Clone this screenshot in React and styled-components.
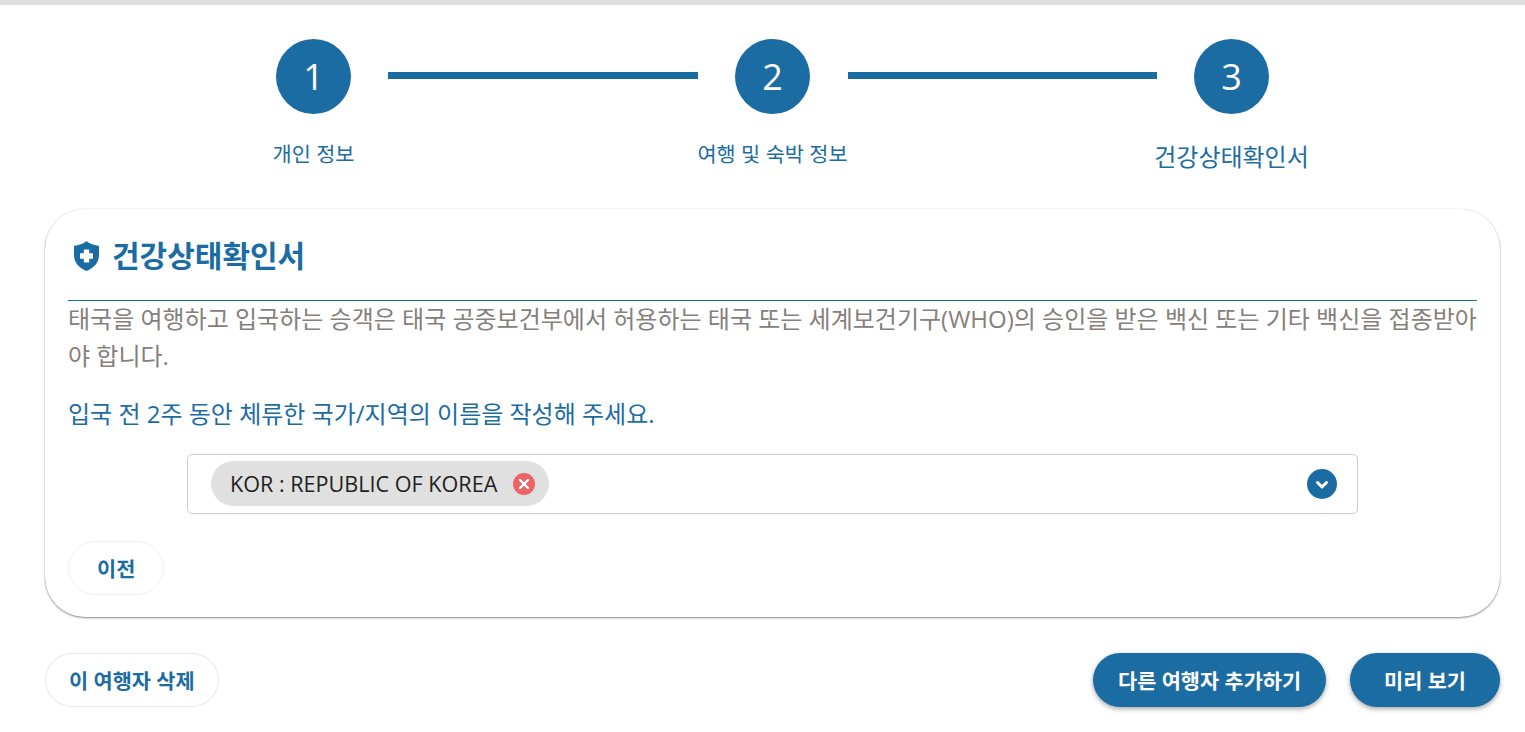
import React from "react";
import styled, { createGlobalStyle } from "styled-components";

const BLUE = "#1c6ca4";

const GlobalStyle = createGlobalStyle`
  html, body {
    margin: 0;
    padding: 0;
    background: #fff;
    font-family: "Open Sans", "Noto Sans CJK KR", sans-serif;
  }
`;

const Page = styled.div`
  width: 1525px;
  height: 732px;
  overflow: hidden;
  border-top: 5px solid #dedede;
  box-sizing: border-box;
`;

const Stepper = styled.div`
  display: flex;
  justify-content: center;
  padding: 34px 0 0 21px;
  height: 170px;
  box-sizing: border-box;
`;

const Step = styled.div`
  width: ${(p) => p.$width || 150}px;
  padding-right: ${(p) => (p.$width ? 0 : 1)}px;
  box-sizing: border-box;
  display: flex;
  flex-direction: column;
  align-items: center;
`;

const Circle = styled.div`
  width: 75px;
  height: 75px;
  border-radius: 50%;
  background: ${BLUE};
  color: #fff;
  font-size: 36px;
  display: flex;
  align-items: center;
  justify-content: center;
`;

const StepLabel = styled.div`
  margin-top: ${(p) => (p.$active ? "29px" : "26px")};
  color: ${BLUE};
  font-size: ${(p) => (p.$active ? "24px" : "20.8px")};
  line-height: 28px;
  white-space: nowrap;
`;

const Connector = styled.div`
  width: ${(p) => p.$width}px;
  height: 7px;
  margin-top: 33px;
  background: ${BLUE};
`;

const Card = styled.section`
  width: 1455px;
  height: 408px;
  margin-left: 45px;
  padding: 0 23px;
  box-sizing: border-box;
  border-radius: 40px;
  background: #fff;
  box-shadow: 0 1px 2px rgba(0, 0, 0, 0.45), 0 0 1px rgba(0, 0, 0, 0.15);
  margin-top: 34px;
`;

const CardHeader = styled.div`
  height: 92px;
  display: flex;
  align-items: center;
  gap: 13px;
  padding: 10px 0 7px 6px;
  box-sizing: border-box;
  border-bottom: 1px solid ${BLUE};
`;

const Title = styled.h2`
  margin: 0;
  color: ${BLUE};
  font-size: 30px;
  font-weight: 700;
  line-height: 40px;
`;

const Notice = styled.p`
  margin: 0;
  color: #85807b;
  font-size: 24px;
  line-height: 36.5px;
  word-break: break-all;
`;

const Question = styled.p`
  margin: 21px 0 0;
  color: ${BLUE};
  font-size: 24px;
  line-height: 37px;
`;

const Select = styled.div`
  width: 1171px;
  height: 60px;
  margin: 22px 0 0 119px;
  box-sizing: border-box;
  border: 1px solid #ccc;
  border-radius: 5px;
  display: flex;
  align-items: center;
  justify-content: space-between;
  padding: 0 20px 1px 23px;
`;

const Chip = styled.div`
  height: 45px;
  padding: 0 14px 0 19px;
  border-radius: 23px;
  background: #e0e0e0;
  color: #222;
  font-size: 21.6px;
  display: flex;
  align-items: center;
  gap: 16px;
`;

const Footer = styled.div`
  display: flex;
  justify-content: space-between;
  width: 1455px;
  margin: 36px 0 0 45px;
`;

const Actions = styled.div`
  display: flex;
  gap: 24px;
`;

const OutlineButton = styled.button`
  height: 54px;
  padding: 0 ${(p) => p.$pad || 23}px;
  border: 1px solid #e6e6e6;
  border-radius: 27px;
  background: #fff;
  color: ${BLUE};
  font-family: inherit;
  font-size: 20.8px;
  font-weight: 600;
`;

const BackButton = styled(OutlineButton)`
  display: block;
  margin-top: 27px;
  border-color: #f0f0f0;
`;

const PrimaryButton = styled.button`
  height: 54px;
  padding: 0 ${(p) => p.$pad || 25}px;
  border: none;
  border-radius: 27px;
  background: ${BLUE};
  color: #fff;
  font-family: inherit;
  font-size: 20.8px;
  font-weight: 600;
  box-shadow: 0 2px 5px rgba(0, 0, 0, 0.35);
`;

const ShieldIcon = () => (
  <svg width="25" height="30" viewBox="0 0 25 30">
    <path
      d="M12.500 0C14.500 2 19.500 4.300 24.500 4.800c.3 0 .5.2.5.5V14c0 7.500-5 13-12.500 16C5 27 0 21.500 0 14V5.300c0-.3.2-.5.5-.5C5.500 4.300 10.500 2 12.500 0z"
      fill={BLUE}
    />
    <path d="M10.300 8.500h4.400c.3 0 .5.2.5.5v3.300h3.300c.3 0 .5.2.5.5v4.400c0 .3-.2.5-.5.5h-3.300v3.300c0 .3-.2.5-.5.5h-4.400c-.3 0-.5-.2-.5-.5v-3.300H6.500c-.3 0-.5-.2-.5-.5v-4.400c0-.3.2-.5.5-.5h3.300V9c0-.3.2-.5.5-.5z" fill="#fff" />
  </svg>
);

const RemoveIcon = () => (
  <svg width="22" height="22" viewBox="0 0 22 22">
    <circle cx="11" cy="11" r="11" fill="#ec6467" />
    <path d="M7 7l8 8M15 7l-8 8" stroke="#fff" strokeWidth="2.400" strokeLinecap="round" />
  </svg>
);

const ChevronIcon = () => (
  <svg width="30" height="30" viewBox="0 0 30 30">
    <circle cx="15" cy="15" r="15" fill={BLUE} />
    <path d="M10.500 13.500 15 18l4.500-4.500" fill="none" stroke="#fff" strokeWidth="3" strokeLinecap="round" strokeLinejoin="round" />
  </svg>
);

export default function App() {
  return (
    <Page>
      <GlobalStyle />
      <Stepper>
        <Step $width={149}>
          <Circle>1</Circle>
          <StepLabel>개인 정보</StepLabel>
        </Step>
        <Connector $width={310} />
        <Step>
          <Circle>2</Circle>
          <StepLabel>여행 및 숙박 정보</StepLabel>
        </Step>
        <Connector $width={309} />
        <Step>
          <Circle>3</Circle>
          <StepLabel $active>건강상태확인서</StepLabel>
        </Step>
      </Stepper>
      <Card>
        <CardHeader>
          <ShieldIcon />
          <Title>건강상태확인서</Title>
        </CardHeader>
        <Notice>
          태국을 여행하고 입국하는 승객은 태국 공중보건부에서 허용하는 태국 또는 세계보건기구(WHO)의 승인을 받은 백신 또는 기타 백신을 접종받아야 합니다.
        </Notice>
        <Question>입국 전 2주 동안 체류한 국가/지역의 이름을 작성해 주세요.</Question>
        <Select>
          <Chip>
            KOR : REPUBLIC OF KOREA
            <RemoveIcon />
          </Chip>
          <ChevronIcon />
        </Select>
        <BackButton $pad={28}>이전</BackButton>
      </Card>
      <Footer>
        <OutlineButton>이 여행자 삭제</OutlineButton>
        <Actions>
          <PrimaryButton>다른 여행자 추가하기</PrimaryButton>
          <PrimaryButton $pad={34}>미리 보기</PrimaryButton>
        </Actions>
      </Footer>
    </Page>
  );
}
